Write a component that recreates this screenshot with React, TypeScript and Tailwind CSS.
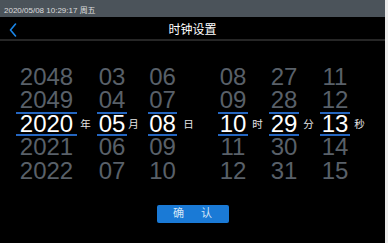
import React from 'react';

type Column = {
  items: string[];
  width: string;
  margin: string;
  label: string;
  labelMargin: string;
};

// five visible rows per wheel, the middle one is selected
const columns: Column[] = [
  { items: ['2048', '2049', '2020', '2021', '2022'], width: 'w-[61px]', margin: 'ml-[16px]', label: '年', labelMargin: 'ml-[3px]' },
  { items: ['03', '04', '05', '06', '07'], width: 'w-[30px]', margin: 'ml-[6px]', label: '月', labelMargin: 'ml-[1px]' },
  { items: ['06', '07', '08', '09', '10'], width: 'w-[29px]', margin: 'ml-[9px]', label: '日', labelMargin: 'ml-[6px]' },
  { items: ['08', '09', '10', '11', '12'], width: 'w-[30px]', margin: 'ml-[24px]', label: '时', labelMargin: 'ml-[4px]' },
  { items: ['27', '28', '29', '30', '31'], width: 'w-[30px]', margin: 'ml-[6px]', label: '分', labelMargin: 'ml-[4px]' },
  { items: ['11', '12', '13', '14', '15'], width: 'w-[30px]', margin: 'ml-[6px]', label: '秒', labelMargin: 'ml-[4px]' },
];

function Wheel({ column }: { column: Column }) {
  return (
    <>
      <div className={`flex flex-col ${column.width} ${column.margin}`}>
        {column.items.map((value, i) =>
          i === 2 ? (
            <div
              key={i}
              className="h-[23.5px] leading-[20px] flex items-center justify-center border-y-2 border-[#2566c0] text-white"
            >
              {value}
            </div>
          ) : (
            <div key={i} className="h-[23.5px] leading-[20px] flex items-center justify-center text-[#596069]">
              {value}
            </div>
          )
        )}
      </div>
      <div
        className={`w-[11px] self-center flex justify-center text-[10.5px] text-[#e6e6e6] ${column.labelMargin}`}
        style={{ fontFamily: '"Noto Sans CJK SC", sans-serif' }}
      >
        {column.label}
      </div>
    </>
  );
}

export default function App() {
  return (
    <div className="w-[388px] h-[243px] flex bg-[#ececec]" style={{ fontFamily: '"Liberation Sans", "Noto Sans CJK SC", sans-serif' }}>
      <div className="w-[385px] h-[243px] bg-black flex flex-col">
        {/* Status bar */}
        <div className="h-[17px] bg-[#4b535a] flex items-center pl-[4px] pt-[4px] text-[8px] text-[#dcdcdc]">
          2020/05/08 10:29:17 周五
        </div>

        {/* Header */}
        <div className="h-[24px] grid grid-cols-[1fr_auto_1fr] items-center border-b-2 border-[#262626] pt-[3px]">
          <div className="pl-[9px] flex items-center">
            <svg width="8" height="14" viewBox="0 0 8 14" fill="none" stroke="#1a86e8" strokeWidth="1.6" strokeLinecap="round" strokeLinejoin="round">
              <polyline points="6.5 1 1.5 7 6.5 13" />
            </svg>
          </div>
          <div className="text-[12px] text-white">时钟设置</div>
          <div />
        </div>

        {/* Pickers */}
        <div className="flex pt-[24px] text-[24px]">
          {columns.map((c, i) => (
            <Wheel key={i} column={c} />
          ))}
        </div>

        {/* Confirm */}
        <div className="flex justify-center mt-[22px]">
          <button className="w-[72px] h-[18px] rounded-[2px] bg-[#1a7ad6] text-[11px] text-[#d4e6f8] flex items-center justify-center [word-spacing:14px]">
            确 认
          </button>
        </div>
      </div>
    </div>
  );
}
